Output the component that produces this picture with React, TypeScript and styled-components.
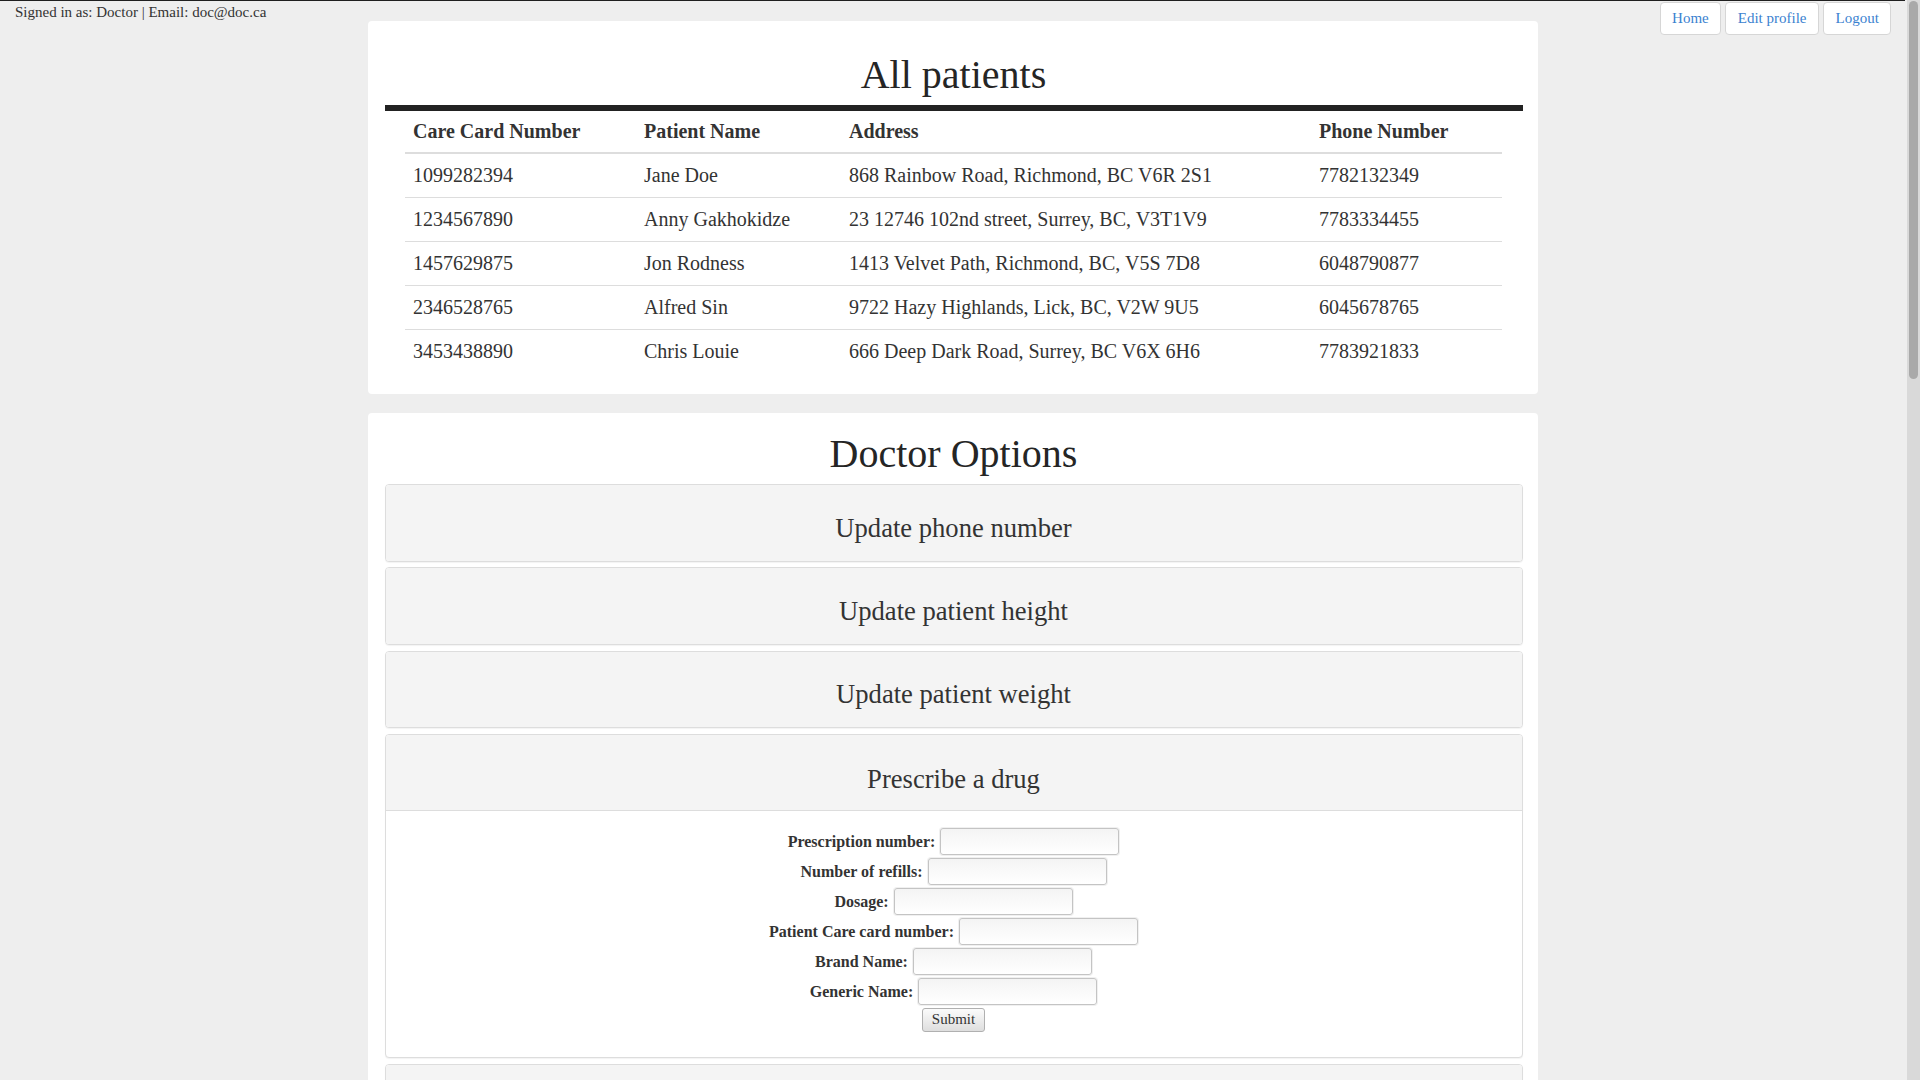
import React from "react";
import styled, { createGlobalStyle } from "styled-components";

const GlobalStyle = createGlobalStyle`
  html, body {
    margin: 0;
    padding: 0;
  }
  body {
    background: #eeeeee;
    border-top: 1px solid #1f1f1f;
    font-family: "Liberation Serif", "Times New Roman", serif;
    color: #333333;
    overflow-x: hidden;
  }
`;

const patients = [
  { card: "1099282394", name: "Jane Doe", address: "868 Rainbow Road, Richmond, BC V6R 2S1", phone: "7782132349" },
  { card: "1234567890", name: "Anny Gakhokidze", address: "23 12746 102nd street, Surrey, BC, V3T1V9", phone: "7783334455" },
  { card: "1457629875", name: "Jon Rodness", address: "1413 Velvet Path, Richmond, BC, V5S 7D8", phone: "6048790877" },
  { card: "2346528765", name: "Alfred Sin", address: "9722 Hazy Highlands, Lick, BC, V2W 9U5", phone: "6045678765" },
  { card: "3453438890", name: "Chris Louie", address: "666 Deep Dark Road, Surrey, BC V6X 6H6", phone: "7783921833" },
];

const fields = [
  "Prescription number:",
  "Number of refills:",
  "Dosage:",
  "Patient Care card number:",
  "Brand Name:",
  "Generic Name:",
];

const App = () => {
  return (
    <Page>
      <GlobalStyle />
      <TopBar>
        <SignedIn>Signed in as: Doctor | Email: doc@doc.ca</SignedIn>
        <Nav>
          <NavButton href="#">Home</NavButton>
          <NavButton href="#">Edit profile</NavButton>
          <NavButton href="#">Logout</NavButton>
        </Nav>
      </TopBar>

      <Card $top={31.8}>
        <Title>All patients</Title>
        <Rule />
        <PatientTable>
          <colgroup>
            <col style={{ width: 231 }} />
            <col style={{ width: 205 }} />
            <col style={{ width: 470 }} />
            <col style={{ width: 191 }} />
          </colgroup>
          <thead>
            <tr>
              <th>Care Card Number</th>
              <th>Patient Name</th>
              <th>Address</th>
              <th>Phone Number</th>
            </tr>
          </thead>
          <tbody>
            {patients.map((p) => (
              <tr key={p.card}>
                <td>{p.card}</td>
                <td>{p.name}</td>
                <td>{p.address}</td>
                <td>{p.phone}</td>
              </tr>
            ))}
          </tbody>
        </PatientTable>
      </Card>

      <Card $top={18.8}>
        <Title>Doctor Options</Title>
        <PanelGroup>
          <Panel>
            <PanelHeading>Update phone number</PanelHeading>
          </Panel>
          <Panel>
            <PanelHeading>Update patient height</PanelHeading>
          </Panel>
          <Panel>
            <PanelHeading>Update patient weight</PanelHeading>
          </Panel>
          <Panel>
            <PanelHeading $open>Prescribe a drug</PanelHeading>
            <PanelBody>
              <DrugForm onSubmit={(e) => e.preventDefault()}>
                {fields.map((f) => (
                  <FieldRow key={f}>
                    <FieldLabel>{f}</FieldLabel>
                    <TextInput type="text" />
                  </FieldRow>
                ))}
                <SubmitButton type="submit">Submit</SubmitButton>
              </DrugForm>
            </PanelBody>
          </Panel>
          <Panel>
            <PanelHeading>View prescriptions</PanelHeading>
          </Panel>
        </PanelGroup>
      </Card>

      <ScrollTrack>
        <ScrollThumb />
      </ScrollTrack>
    </Page>
  );
};

export default App;

const Page = styled.div`
  width: 1905px;
  min-height: 3060px;
`;

const TopBar = styled.header`
  display: flex;
  justify-content: space-between;
  align-items: flex-start;
  height: 20px;
  padding: 0 13.7px 0 15px;
`;

const SignedIn = styled.div`
  font-size: 15px;
  line-height: 20px;
  padding-top: 1px;
  color: #333333;
`;

const Nav = styled.nav`
  display: flex;
  gap: 4px;
  margin-top: 0.7px;
  position: relative;
  z-index: 1;
`;

const NavButton = styled.a`
  display: flex;
  align-items: center;
  box-sizing: border-box;
  height: 33px;
  padding: 0 11.5px;
  background: #ffffff;
  border: 1px solid #d6d6d6;
  border-radius: 4px;
  color: #3b82d0;
  font-size: 15px;
  text-decoration: none;
`;

const Card = styled.section<{ $top: number }>`
  box-sizing: border-box;
  width: 1170px;
  margin: 0 auto 19px;
  padding: ${(p) => p.$top}px 15px 21.5px 17px;
  background: #ffffff;
  border-radius: 4px;
`;

const Title = styled.h1`
  margin: 0 0 8px;
  font-size: 40px;
  line-height: 44px;
  font-weight: 400;
  text-align: center;
  color: #252525;
`;

const Rule = styled.div`
  height: 6px;
  background: #222222;
`;

const PatientTable = styled.table`
  width: 1097px;
  margin: 0 auto;
  border-collapse: collapse;
  table-layout: fixed;
  font-size: 20px;
  color: #333333;
  th {
    text-align: left;
    padding: 8px;
    line-height: 25px;
    font-weight: bold;
    border-bottom: 2px solid #dddddd;
  }
  td {
    padding: 8px;
    line-height: 27px;
    border-top: 1px solid #dddddd;
    white-space: nowrap;
  }
`;

const PanelGroup = styled.div`
  display: flex;
  flex-direction: column;
  gap: 5.8px;
`;

const Panel = styled.div`
  border: 1px solid #dddddd;
  border-radius: 4px;
  background: #ffffff;
  overflow: hidden;
  box-shadow: 0 1px 1px rgba(0, 0, 0, 0.05);
`;

const PanelHeading = styled.div<{ $open?: boolean }>`
  background: #f4f4f4;
  padding: ${(p) => (p.$open ? "29px 15px 16.5px" : "27.5px 15px 18px")};
  font-size: 26.6px;
  line-height: 30px;
  text-align: center;
  color: #333333;
  border-bottom: ${(p) => (p.$open ? "1px solid #dddddd" : "none")};
`;

const PanelBody = styled.div`
  padding: 16.7px 15px 25.6px;
`;

const DrugForm = styled.form`
  display: flex;
  flex-direction: column;
  align-items: center;
  gap: 3px;
`;

const FieldRow = styled.div`
  display: flex;
  align-items: center;
  gap: 5px;
`;

const FieldLabel = styled.label`
  font-size: 16px;
  line-height: 20px;
  font-weight: bold;
  color: #333333;
`;

const TextInput = styled.input`
  box-sizing: border-box;
  width: 179px;
  height: 27px;
  border: 1px solid #c4c4c4;
  border-radius: 3px;
  background: linear-gradient(to bottom, #f4f4f4, #ffffff);
  box-shadow: 0 0 0 1px #f0f0f0;
  font-family: inherit;
  font-size: 15px;
  padding: 0 4px;
`;

const SubmitButton = styled.button`
  box-sizing: border-box;
  height: 23.4px;
  padding: 0 9px;
  font-family: inherit;
  font-size: 15px;
  color: #333333;
  border: 1px solid #b0b0b0;
  border-radius: 3px;
  background: linear-gradient(to bottom, #fbfbfb, #dedede);
  cursor: pointer;
`;

/* stand-in for the browser scrollbar seen in the screenshot */
const ScrollTrack = styled.div`
  position: fixed;
  top: 0;
  right: 0;
  width: 15px;
  height: 100vh;
  box-sizing: border-box;
  padding: 1px 2px 0 4px;
  background: linear-gradient(to right, #eeeeee 2px, #d9d9d9 2px);
`;

const ScrollThumb = styled.div`
  width: 9px;
  height: 378px;
  border-radius: 5px;
  background: #a9a9a9;
`;
